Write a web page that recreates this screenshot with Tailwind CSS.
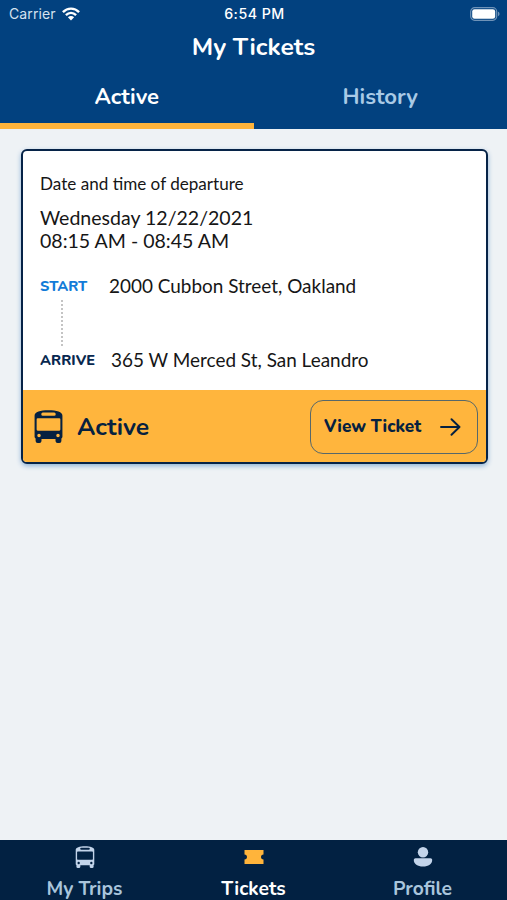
<!DOCTYPE html>
<html lang="en">
<head>
    <meta charset="UTF-8">
    <meta name="viewport" content="width=device-width, initial-scale=1.0">
    <title>My Tickets</title>
    <script src="https://cdn.jsdelivr.net/npm/@tailwindcss/browser@4"></script>
</head>
<body class="bg-[#eef2f5] font-['Nunito','Open_Sans',sans-serif]">
    <!-- Shared bus icon -->
    <svg class="hidden">
        <symbol id="bus" viewBox="0 0 28 32">
            <path fill="currentColor" fill-rule="evenodd" d="M.5 5.500C.5 2 6 .3 14 .3S27.500 2 27.500 5.500V26a2 2 0 0 1-1 1.700V30a2 2 0 0 1-2 2h-1.700a2 2 0 0 1-2-2v-2H7.200v2a2 2 0 0 1-2 2H3.500a2 2 0 0 1-2-2v-2.300A2 2 0 0 1 .5 26ZM8.500 2.500a1.500 1.500 0 0 0 0 3h11a1.500 1.500 0 0 0 0-3ZM3.500 8a1 1 0 0 0-1 1v10a1 1 0 0 0 1 1h21a1 1 0 0 0 1-1V9a1 1 0 0 0-1-1ZM4.800 23a1.700 1.700 0 1 0 0 3.400 1.700 1.700 0 0 0 0-3.400Zm18.400 0a1.700 1.700 0 1 0 0 3.400 1.700 1.700 0 0 0 0-3.400Z"/>
        </symbol>
    </svg>

    <div class="flex flex-col h-[900px] w-[507px] overflow-hidden">
        <!-- Header -->
        <header class="bg-[#02417f] h-[129px] shrink-0 text-white">
            <div class="grid grid-cols-3 items-center h-[27px] pl-[9px] pr-[7px] font-['Inter',sans-serif] text-[14px]">
                <div class="flex items-center gap-[6px] text-[#d5e2ef]">
                    <span class="tracking-[0.1px]">Carrier</span>
                    <svg class="w-[18px] h-[14px]" viewBox="0 0 18 14" fill="none" stroke="#fff" stroke-width="2.400">
                        <path d="M.9 5.100C5.500.4 12.500.4 17.100 5.100M3.900 8.100c3-2.900 7.200-2.900 10.200 0"/>
                        <path fill="#fff" stroke="none" d="M5.900 10.300c1.800-1.700 4.400-1.700 6.200 0L9 13.500Z"/>
                    </svg>
                </div>
                <span class="text-center text-[14.2px] font-medium tracking-[0.5px]">6:54 PM</span>
                <svg class="justify-self-end w-[30px] h-[14px]" viewBox="0 0 30 14">
                    <rect x=".7" y=".7" width="26" height="12.600" rx="4" fill="none" stroke="#6f93b8" stroke-width="1.200"/>
                    <rect x="2.200" y="2.200" width="23" height="9.600" rx="2.300" fill="#fff"/>
                    <path d="M28 4.800c2 .6 2 3.800 0 4.400Z" fill="#6f93b8"/>
                </svg>
            </div>
            <h1 class="h-[40px] text-center text-[24.700px] leading-[41px] font-bold">My Tickets</h1>
            <div class="grid grid-cols-2 h-[62px] text-center text-[22.100px] leading-[56px] font-bold">
                <div class="h-[62px] pt-[2px] border-b-6 border-[#ffb43b]">Active</div>
                <div class="pt-[2px] text-[#a9cae6]">History</div>
            </div>
        </header>

        <!-- Ticket card -->
        <main class="flex-1 pt-[20px] pl-[21px] pr-[19px]">
            <div class="flex flex-col h-[315px] border-[2.5px] border-[#062347] rounded-[6px] bg-white overflow-hidden shadow-[0_2px_5px_#8fb3d6]">
                <div class="flex-1 pl-[17px] pt-[21px] font-['Lato',sans-serif] text-[#161616]">
                    <p class="text-[17.100px] leading-[24px]">Date and time of departure</p>
                    <p class="mt-[10px] text-[19.550px] leading-[23px]">Wednesday 12/22/2021<br>08:15 AM - 08:45 AM</p>
                    <div class="mt-[20px] flex items-center h-[28px]">
                        <span class="w-[69px] pt-px font-['Nunito','Open_Sans',sans-serif] text-[14.600px] font-extrabold text-[#127bd8]">START</span>
                        <span class="text-[18.950px]">2000 Cubbon Street, Oakland</span>
                    </div>
                    <div class="ml-[21px] h-[46px] w-[2px] bg-[repeating-linear-gradient(to_bottom,#c4c4c4_0_2px,#fff_2px_4px)]"></div>
                    <div class="flex items-center h-[28px]">
                        <span class="w-[71px] pt-px font-['Nunito','Open_Sans',sans-serif] text-[14.600px] font-extrabold text-[#08284f]">ARRIVE</span>
                        <span class="text-[18.950px]">365 W Merced St, San Leandro</span>
                    </div>
                </div>
                <div class="flex items-center h-[72px] shrink-0 bg-[#ffb53d] pt-px pl-[11px] pr-[8px] text-[#062140]">
                    <svg class="w-[29px] h-[33px]"><use href="#bus"/></svg>
                    <span class="ml-[14px] pt-px text-[24.700px] leading-[34px] font-bold">Active</span>
                    <button class="ml-auto flex items-center h-[54px] w-[168px] border-[1.5px] border-[#57686a] rounded-[13px] pl-[13px] pr-[16px] font-extrabold text-[17.200px]">
                        View Ticket
                        <svg class="ml-auto w-[21px] h-[18px]" viewBox="0 0 21 18" fill="none" stroke="currentColor" stroke-width="1.900" stroke-linecap="round" stroke-linejoin="round">
                            <path d="M1 9h18M11.500 1.200 19.500 9l-8 7.800"/>
                        </svg>
                    </button>
                </div>
            </div>
        </main>

        <!-- Bottom navigation -->
        <nav class="grid grid-cols-3 h-[60px] shrink-0 bg-[#022142] text-[19.300px] leading-[20px] font-bold text-[#a9c5dc]">
            <div class="flex flex-col items-center pt-[6px]">
                <svg class="w-[20px] h-[22px] text-[#c3d4ea]"><use href="#bus"/></svg>
                <span class="mt-[11px]">My Trips</span>
            </div>
            <div class="flex flex-col items-center pt-[6px] text-white">
                <svg class="w-[20px] h-[22px]" viewBox="0 0 20 22">
                    <path fill="#ffb43b" d="M.5 4h19v4.500c-3.300 0-3.300 5 0 5V18H.5v-4.500c3.300 0 3.300-5 0-5Z"/>
                </svg>
                <span class="mt-[11px]">Tickets</span>
            </div>
            <div class="flex flex-col items-center pt-[6px]">
                <svg class="w-[20px] h-[22px]" viewBox="0 0 20 22" fill="#c3d4ea">
                    <circle cx="10" cy="6.200" r="5.200"/>
                    <path d="M2.500 12.300h15c1 0 1.700.7 1.700 1.700C19.200 18 15.500 20.500 10 20.500S.8 18 .8 14C.8 13 1.500 12.300 2.500 12.300Z"/>
                </svg>
                <span class="mt-[11px]">Profile</span>
            </div>
        </nav>
    </div>
</body>
</html>
